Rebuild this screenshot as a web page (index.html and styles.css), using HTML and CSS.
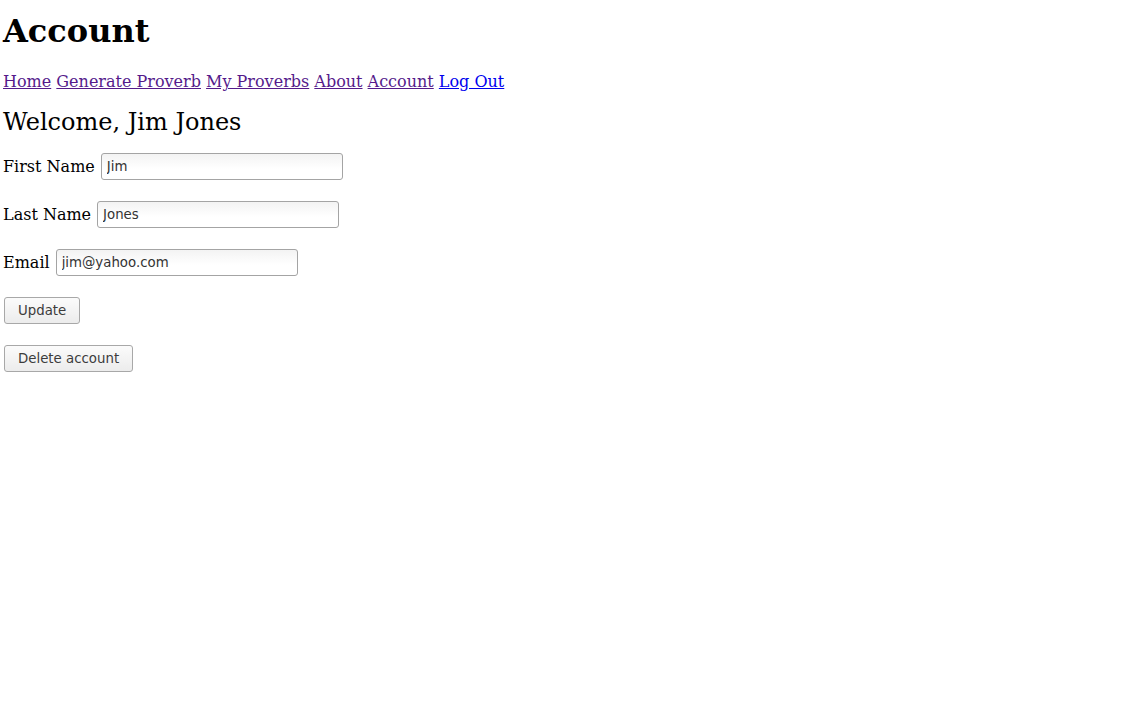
FILE: index.html
```html
<!DOCTYPE html>
<html>
<head>
<meta charset="utf-8">
<title>Account</title>
<link rel="stylesheet" href="styles.css">
</head>
<body>
<h1 class="title">Account</h1>
<nav class="nav">
<a class="visited" href="#">Home</a> <a class="visited" href="#">Generate Proverb</a> <a class="visited" href="#">My Proverbs</a> <a class="visited" href="#">About</a> <a class="visited" href="#">Account</a> <a class="fresh" href="#">Log Out</a>
</nav>
<h2 class="welcome">Welcome, Jim Jones</h2>
<form class="form">
<div class="row"><label>First Name</label> <input class="field" type="text" value="Jim"></div>
<div class="row"><label>Last Name</label> <input class="field" type="text" value="Jones"></div>
<div class="row"><label>Email</label> <input class="field" type="text" value="jim@yahoo.com"></div>
<div class="row"><button class="btn" type="button">Update</button></div>
<div class="row"><button class="btn" type="button">Delete account</button></div>
</form>
</body>
</html>
```
FILE: styles.css
```css
html, body {
  background: #fff;
}
body {
  margin: 0;
  padding: 0 3px;
  font-family: "DejaVu Serif", serif;
  font-size: 16px;
  color: #000;
}
.title {
  font-size: 32px;
  font-weight: bold;
  margin: 13px 0 0 0;
  line-height: 37px;
}
.nav {
  margin-top: 22px;
  line-height: 19px;
}
.nav a {
  color: #0000ee;
}
.nav a.visited {
  color: #551a8b;
}
.welcome {
  font-size: 24px;
  font-weight: normal;
  margin: 17px 0 0 0;
  line-height: 28px;
}
.form {
  margin-top: 17px;
  display: flex;
  flex-direction: column;
  gap: 21px;
}
.row {
  display: flex;
  align-items: center;
  gap: 6px;
  height: 27px;
}
.field {
  box-sizing: border-box;
  width: 242px;
  height: 27px;
  margin: 0;
  padding: 0 5px;
  border: 1px solid #a4a4a4;
  border-radius: 3px;
  background: linear-gradient(#f3f3f3, #ffffff 60%);
  font-family: "DejaVu Sans", sans-serif;
  font-size: 13.33px;
  color: #333;
}
.btn {
  box-sizing: border-box;
  height: 27px;
  margin: 0 0 0 1px;
  padding: 0 13px;
  border: 1px solid #a8a8a8;
  border-radius: 3px;
  background: linear-gradient(#fbfbfb, #ececec);
  font-family: "DejaVu Sans", sans-serif;
  font-size: 13.33px;
  color: #3c3c3c;
}
```
